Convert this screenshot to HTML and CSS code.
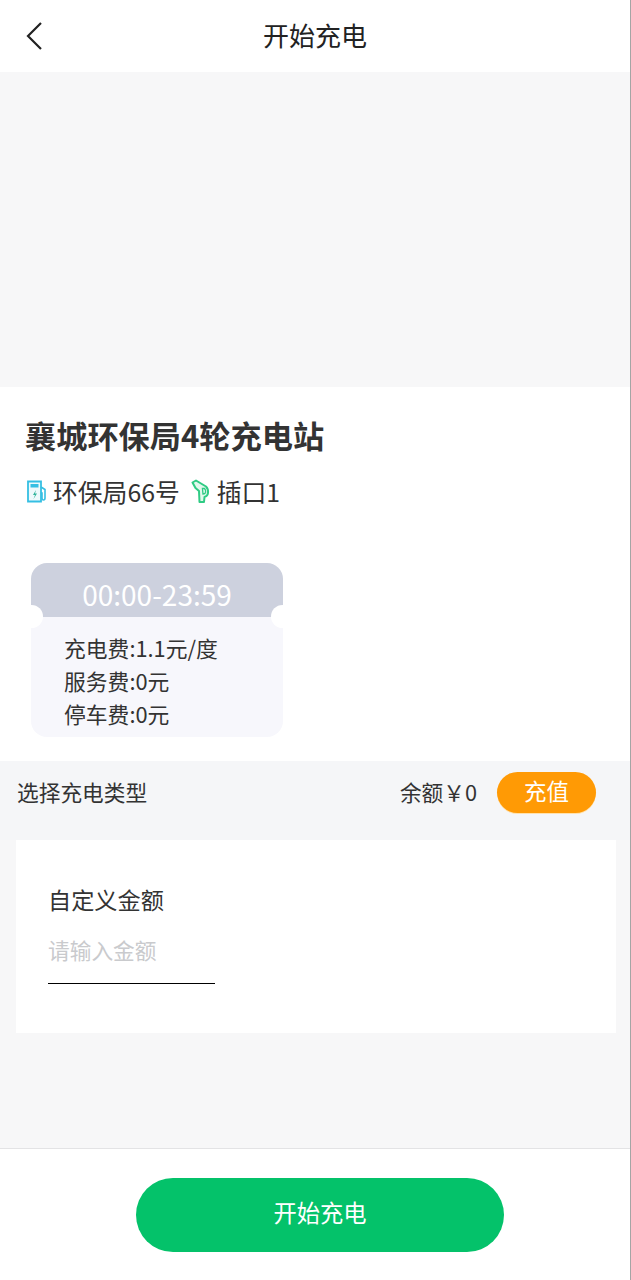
FILE: index.html
```html
<!DOCTYPE html>
<html lang="zh-CN">
<head>
    <meta charset="UTF-8">
    <meta name="viewport" content="width=device-width, initial-scale=1.0">
    <title>开始充电</title>
    <link rel="stylesheet" href="styles.css">
</head>
<body>

    <div class="page">

        <!-- Header -->
        <header class="top-bar">
            <button class="back-btn" aria-label="返回">
                <svg width="18" height="30" viewBox="0 0 18 30"><path d="M16 2 L3 15 L16 28" fill="none" stroke="#222" stroke-width="2.2"/></svg>
            </button>
            <h1>开始充电</h1>
        </header>

        <!-- Map placeholder -->
        <div class="banner"></div>

        <!-- Station info -->
        <section class="station">
            <h2>襄城环保局4轮充电站</h2>
            <div class="station-meta">
                <svg class="meta-icon" width="22" height="24" viewBox="0 0 22 24">
                    <path d="M2 22.5 V2.5 H15 V22.5 Z" fill="#eef9fc" stroke="#35bfe3" stroke-width="1.8"/>
                    <rect x="4.5" y="5" width="8" height="3.5" fill="#35bfe3"/>
                    <path d="M10 11 L7 16 H9 L7.5 20 L11 14.5 H9 Z" fill="#2fb39a"/>
                    <path d="M15 8 L19 10.5 V19 Q19 21 17.5 21 Q16 21 16 19 V14 H15" fill="none" stroke="#35bfe3" stroke-width="1.6"/>
                </svg>
                <span>环保局66号</span>
                <svg class="meta-icon" width="20" height="24" viewBox="0 0 20 24">
                    <path d="M1.5 3.5 L5 1.5 L15 7.5 Q17.5 10 17 14 Q16.5 17.5 13.5 18 L13 23 H8.5 L8 12 L4.5 9 Z" fill="#e2f8ec" stroke="#2fcb84" stroke-width="2" stroke-linejoin="round"/>
                    <path d="M11.5 9.5 H13.5 Q15 11 14.5 13.5 Q14 15 12 15 Z" fill="#fff" stroke="#2fcb84" stroke-width="1.4"/>
                </svg>
                <span>插口1</span>
            </div>

            <!-- Price ticket -->
            <div class="ticket">
                <div class="ticket-head">00:00-23:59</div>
                <div class="ticket-body">
                    <p>充电费:1.1元/度</p>
                    <p>服务费:0元</p>
                    <p>停车费:0元</p>
                </div>
            </div>
        </section>

        <!-- Charge type -->
        <section class="charge">
            <div class="charge-row">
                <span>选择充电类型</span>
                <div class="balance">
                    <span>余额￥0</span>
                    <button class="recharge-btn">充值</button>
                </div>
            </div>
            <div class="amount-card">
                <label for="amount">自定义金额</label>
                <input type="text" id="amount" placeholder="请输入金额">
            </div>
        </section>

        <!-- Footer -->
        <footer class="bottom-bar">
            <button class="start-btn">开始充电</button>
        </footer>
    </div>

</body>
</html>
```

FILE: styles.css
```css
body {
    margin: 0;
    padding: 0;
    background-color: #fff;
    color: #333;
    font-family: 'Noto Sans CJK SC', 'Noto Sans', sans-serif;
}

button {
    border: none;
    padding: 0;
    font-family: inherit;
    cursor: pointer;
}

.page {
    display: flex;
    flex-direction: column;
    height: 1280px;
    overflow: hidden;
    border-right: 1px solid #a5a5a5;
}

.top-bar {
    position: relative;
    display: flex;
    align-items: center;
    justify-content: center;
    height: 72px;
    flex-shrink: 0;
    box-sizing: border-box;
    padding-bottom: 4px;
}

.top-bar h1 {
    margin: 0;
    font-size: 26px;
    font-weight: 400;
    color: #222;
}

.back-btn {
    position: absolute;
    left: 25px;
    top: 21px;
    display: flex;
    background: none;
}

.banner {
    height: 315px;
    flex-shrink: 0;
    background-color: #f7f7f8;
}

.station {
    height: 374px;
    flex-shrink: 0;
    box-sizing: border-box;
    padding: 25px 0 0 25px;
}

.station h2 {
    margin: 0;
    font-size: 31.2px;
    line-height: 46px;
    font-weight: 700;
    color: #333;
}

.station-meta {
    display: flex;
    align-items: center;
    margin-top: 15px;
    font-size: 24.8px;
    line-height: 36px;
    color: #333;
}

.meta-icon {
    margin: 0 5px 0 1px;
}

.meta-icon + span + .meta-icon {
    margin-left: 11px;
    margin-right: 6px;
}

.ticket {
    width: 252px;
    margin: 54px 0 0 6px;
}

.ticket-head {
    position: relative;
    height: 54px;
    border-radius: 16px 16px 0 0;
    background-color: #cdd1de;
    color: #fff;
    font-size: 28px;
    line-height: 62px;
    text-align: center;
}

/* notches on the ticket edge */
.ticket-head::before,
.ticket-head::after {
    content: "";
    position: absolute;
    bottom: -11px;
    width: 23px;
    height: 23px;
    border-radius: 50%;
    background-color: #fff;
}

.ticket-head::before {
    left: -11px;
}

.ticket-head::after {
    right: -11px;
}

.ticket-body {
    height: 120px;
    box-sizing: border-box;
    padding: 14px 0 0 33px;
    border-radius: 0 0 16px 16px;
    background-color: #f7f7fc;
}

.ticket-body p {
    margin: 0;
    font-size: 21.8px;
    line-height: 33px;
    color: #333;
}

.charge {
    flex: 1;
    background-color: #f7f7f8;
    border-bottom: 1px solid #e3e3e5;
}

.charge-row {
    display: flex;
    align-items: center;
    justify-content: space-between;
    height: 79px;
    box-sizing: border-box;
    padding: 0 34px 18px 17px;
    font-size: 21.7px;
    color: #333;
    background-color: #f5f6f8;
}

.balance {
    display: flex;
    align-items: center;
    gap: 20px;
}

.recharge-btn {
    width: 99px;
    height: 41px;
    margin-top: 2px;
    padding-bottom: 5px;
    border-radius: 21px;
    background-color: #ff9a05;
    box-shadow: 0 1px 0 #ffe2ae;
    color: #fff;
    font-size: 22.5px;
}

.amount-card {
    display: flex;
    flex-direction: column;
    align-items: flex-start;
    height: 193px;
    box-sizing: border-box;
    margin: 0 14px 0 16px;
    padding: 42px 0 0 32px;
    background-color: #fff;
}

.amount-card label {
    font-size: 23.2px;
    line-height: 34px;
    color: #333;
}

.amount-card input {
    width: 167px;
    height: 60px;
    box-sizing: border-box;
    margin-top: 8px;
    padding: 0 0 8px 0;
    border: none;
    border-bottom: 1px solid #000;
    background: none;
    outline: none;
    font-family: inherit;
    font-size: 21.7px;
}

.amount-card input::placeholder {
    color: #c9cacd;
}

.bottom-bar {
    display: flex;
    justify-content: center;
    height: 131px;
    flex-shrink: 0;
    box-sizing: border-box;
    padding: 29px 0 0 10px;
}

.start-btn {
    width: 368px;
    height: 74px;
    padding-bottom: 6px;
    border-radius: 37px;
    background-color: #04c26a;
    color: #fff;
    font-size: 23.3px;
}
```
